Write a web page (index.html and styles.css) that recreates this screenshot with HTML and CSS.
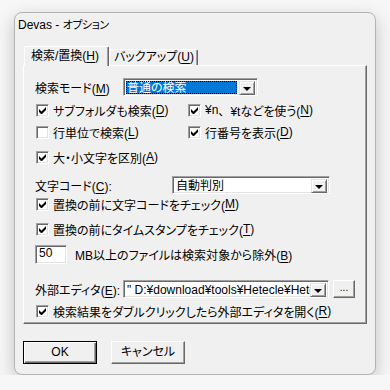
FILE: index.html
```html
<!DOCTYPE html>
<html lang="ja">
<head>
  <meta charset="UTF-8">
  <title>Devas - オプション</title>
  <link rel="stylesheet" href="styles.css">
</head>
<body>
  <div class="window">
    <div class="titlebar">Devas - <span class="kana">オプション</span></div>

    <div class="client">
      <div class="tabs">
        <div class="tab active">検索/置換(<u>H</u>)</div>
        <div class="tab">バックアップ(<u>U</u>)</div>
      </div>

      <div class="panel">
        <div class="row r-mode">
          <span class="label w-mode">検索モード(<u>M</u>)</span>
          <div class="combo mode">
            <div class="combo-text selected"><span>普通の検索</span></div>
            <div class="drop"><i></i></div>
          </div>
        </div>

        <div class="checks">
          <label class="check r-c1"><span class="box on"></span>サブフォルダも検索(<u>D</u>)</label>
          <label class="check r-c1"><span class="box on"></span>¥n<span class="wide">、</span>¥tなどを使う(<u>N</u>)</label>
          <label class="check r-c2"><span class="box"></span>行単位で検索(<u>L</u>)</label>
          <label class="check r-c2"><span class="box on"></span>行番号を表示(<u>D</u>)</label>
          <label class="check r-c3"><span class="box on"></span>大・小文字を区別(<u>A</u>)</label>
        </div>

        <div class="row r-code">
          <span class="label w-code">文字コード(<u>C</u>):</span>
          <div class="combo code">
            <div class="combo-text">自動判別</div>
            <div class="drop"><i></i></div>
          </div>
        </div>

        <label class="check r-c4"><span class="box on"></span>置換の前に文字コードをチェック(<u>M</u>)</label>
        <label class="check r-c5"><span class="box on"></span>置換の前にタイムスタンプをチェック(<u>T</u>)</label>

        <div class="row r-size">
          <div class="edit">50</div>
          <span class="label">MB以上のファイルは検索対象から除外(<u>B</u>)</span>
        </div>

        <div class="row r-editor">
          <span class="label w-mode">外部エディタ(<u>E</u>):</span>
          <div class="combo editor">
            <div class="combo-text">" D:¥download¥tools¥Hetecle¥Hetecrafter.exe"</div>
            <div class="drop"><i></i></div>
          </div>
          <div class="btn small">...</div>
        </div>

        <label class="check r-c6"><span class="box on"></span>検索結果をダブルクリックしたら外部エディタを開く(<u>R</u>)</label>
      </div>

      <div class="buttons">
        <div class="btn push default">OK</div>
        <div class="btn push">キャンセル</div>
      </div>
    </div>
  </div>
</body>
</html>
```

FILE: styles.css
```css
/* dialog in classic windows style */
body {
  margin: 0;
  padding: 12px 0 0 14px;
  background-color: #f7f7f7;
  font-family: "Liberation Sans", "Noto Sans CJK JP", sans-serif;
  font-size: 12px;
  font-feature-settings: "palt";
  color: #000;
}

u {
  text-decoration: underline;
  text-underline-offset: 2px;
}

.wide {
  font-feature-settings: normal;
}

.window {
  width: 360px;
  height: 361px;
  background-color: #f0f0f0;
  border: 1px solid #b4b4b4;
  border-radius: 8px;
  box-shadow: 0 6px 18px rgba(0, 0, 0, 0.22);
  overflow: hidden;
}

.titlebar {
  height: 25px;
  line-height: 25px;
  padding-left: 3px;
}

.titlebar .kana {
  font-size: 11px;
  letter-spacing: -0.5px;
}

.client {
  padding: 8px 8px 0 8px;
}

/* tabs */
.tabs {
  display: flex;
  align-items: flex-end;
  height: 19px;
  padding-left: 1px;
  position: relative;
  z-index: 1;
}

.tab {
  height: 16px;
  line-height: 15px;
  padding: 0 3px 0 4px;
  white-space: nowrap;
  border-top: 1px solid #fff;
  border-left: 1px solid #fff;
  border-right: 1px solid #696969;
  box-shadow: inset -1px 0 #a0a0a0;
  border-radius: 2px 2px 0 0;
  background-color: #f0f0f0;
  box-sizing: border-box;
}

.tab.active {
  height: 20px;
  line-height: 18px;
  width: 85px;
  margin-bottom: -1px;
  padding-left: 6px;
}

.panel {
  border-top: 1px solid #fff;
  border-left: 1px solid #fff;
  border-right: 1px solid #696969;
  border-bottom: 1px solid #696969;
  box-shadow: inset -1px -1px #a0a0a0;
  padding: 12px 0 5px 11px;
  height: 259px;
  box-sizing: border-box;
}

.row {
  display: flex;
  align-items: center;
}

.label {
  white-space: nowrap;
}

.w-mode {
  width: 88px;
  flex: none;
}

.w-code {
  width: 137px;
  flex: none;
}

.r-mode { height: 18px; }
.r-code { height: 18px; margin-top: 11px; }
.r-size { height: 19px; margin-top: 8px; }
.r-editor { height: 18px; margin-top: 16px; }

/* checkboxes */
.checks {
  display: grid;
  grid-template-columns: 152px auto;
}

.check {
  display: flex;
  align-items: center;
  height: 16px;
  padding-left: 1px;
  white-space: nowrap;
}

.r-c1 { margin-top: 6px; }
.r-c2 { margin-top: 6px; }
.r-c3 { margin-top: 9px; }
.r-c4 { margin-top: 2px; }
.r-c5 { margin-top: 9px; }
.r-c6 { margin-top: 5px; }

.box {
  width: 13px;
  height: 13px;
  flex: none;
  box-sizing: border-box;
  margin-right: 4px;
  background-color: #fff;
  border-top: 1px solid #a0a0a0;
  border-left: 1px solid #a0a0a0;
  border-right: 1px solid #fff;
  border-bottom: 1px solid #fff;
  box-shadow: inset 1px 1px #696969, inset -1px -1px #e3e3e3;
  position: relative;
}

.box.on::after {
  content: "";
  position: absolute;
  left: 2px;
  top: 2px;
  width: 7px;
  height: 7px;
  background: url("data:image/svg+xml;utf8,<svg xmlns='http://www.w3.org/2000/svg' width='7' height='7'><path d='M0 2v3l2 2h1l4-4V0L2.5 4.5z' fill='black'/></svg>") no-repeat;
}

/* combos and edits */
.combo {
  display: flex;
  flex: none;
  height: 18px;
  box-sizing: border-box;
  background-color: #fff;
  border-top: 1px solid #a0a0a0;
  border-left: 1px solid #a0a0a0;
  border-right: 1px solid #fff;
  border-bottom: 1px solid #fff;
  box-shadow: inset 1px 1px #696969, inset -1px -1px #e3e3e3;
  padding: 2px 2px 1px 2px;
}

.combo.mode { width: 135px; }
.combo.code { width: 158px; }
.combo.editor { width: 206px; }

.combo-text {
  flex: 1;
  line-height: 14px;
  padding-left: 1px;
  overflow: hidden;
  white-space: nowrap;
}

.combo-text.selected {
  background-color: #0078d7;
  color: #fff;
  outline: 1px dotted #000;
  outline-offset: -1px;
  margin-right: 2px;
}

.drop {
  width: 16px;
  height: 14px;
  flex: none;
  box-sizing: border-box;
  background-color: #f0f0f0;
  border-top: 1px solid #e3e3e3;
  border-left: 1px solid #e3e3e3;
  border-right: 1px solid #696969;
  border-bottom: 1px solid #696969;
  box-shadow: inset 1px 1px #fff, inset -1px -1px #a0a0a0;
  display: flex;
  align-items: center;
  justify-content: center;
}

.drop i {
  width: 0;
  height: 0;
  border-left: 4px solid transparent;
  border-right: 4px solid transparent;
  border-top: 4px solid #000;
  margin-top: 1px;
}

.edit {
  width: 32px;
  height: 19px;
  flex: none;
  box-sizing: border-box;
  margin-right: 8px;
  padding-left: 3px;
  line-height: 15px;
  background-color: #fff;
  border-top: 1px solid #a0a0a0;
  border-left: 1px solid #a0a0a0;
  border-right: 1px solid #fff;
  border-bottom: 1px solid #fff;
  box-shadow: inset 1px 1px #696969, inset -1px -1px #e3e3e3;
}

/* buttons */
.btn {
  box-sizing: border-box;
  background-color: #f0f0f0;
  border-top: 1px solid #fff;
  border-left: 1px solid #fff;
  border-right: 1px solid #696969;
  border-bottom: 1px solid #696969;
  box-shadow: inset -1px -1px #a0a0a0;
  text-align: center;
}

.btn.small {
  width: 22px;
  height: 18px;
  flex: none;
  line-height: 13px;
  margin-left: 4px;
  font-size: 10px;
}

.buttons {
  display: flex;
  gap: 14px;
  margin-top: 17px;
}

.btn.push {
  width: 74px;
  height: 23px;
  line-height: 20px;
}

.btn.default {
  border: 1px solid #000;
  box-shadow: inset 1px 1px #fff, inset -1px -1px #696969, inset -2px -2px #a0a0a0;
}
```
